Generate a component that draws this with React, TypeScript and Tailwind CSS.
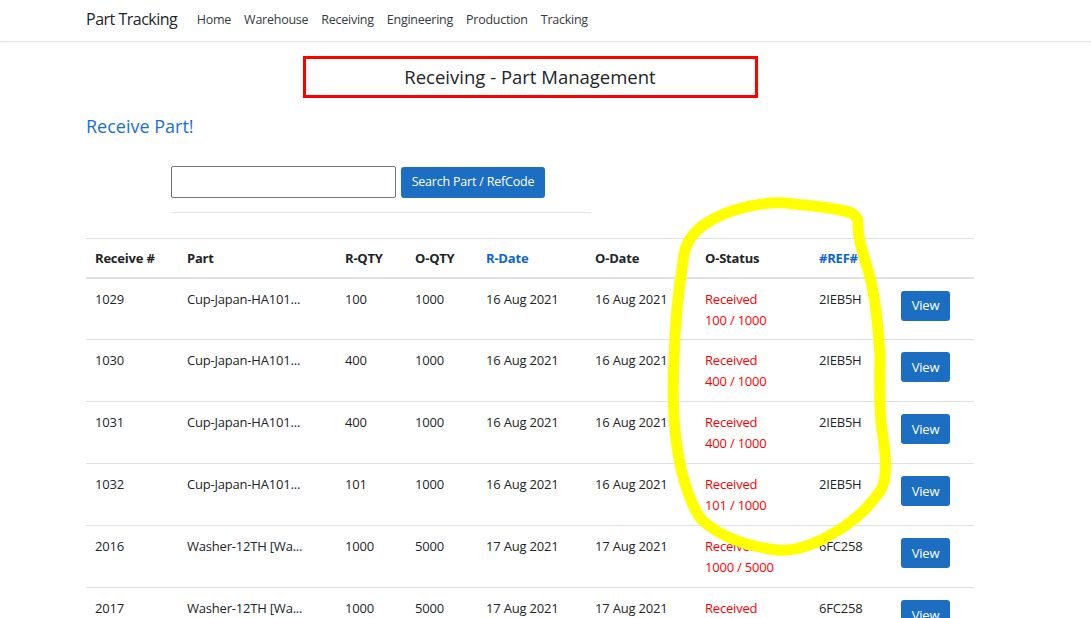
import React from "react";

interface ReceiveRow {
  id: number;
  part: string;
  rQty: number;
  oQty: number;
  rDate: string;
  oDate: string;
  ref: string;
}

const rows: ReceiveRow[] = [
  { id: 1029, part: "Cup-Japan-HA101...", rQty: 100, oQty: 1000, rDate: "16 Aug 2021", oDate: "16 Aug 2021", ref: "2IEB5H" },
  { id: 1030, part: "Cup-Japan-HA101...", rQty: 400, oQty: 1000, rDate: "16 Aug 2021", oDate: "16 Aug 2021", ref: "2IEB5H" },
  { id: 1031, part: "Cup-Japan-HA101...", rQty: 400, oQty: 1000, rDate: "16 Aug 2021", oDate: "16 Aug 2021", ref: "2IEB5H" },
  { id: 1032, part: "Cup-Japan-HA101...", rQty: 101, oQty: 1000, rDate: "16 Aug 2021", oDate: "16 Aug 2021", ref: "2IEB5H" },
  { id: 2016, part: "Washer-12TH [Wa...", rQty: 1000, oQty: 5000, rDate: "17 Aug 2021", oDate: "17 Aug 2021", ref: "6FC258" },
  { id: 2017, part: "Washer-12TH [Wa...", rQty: 1000, oQty: 5000, rDate: "17 Aug 2021", oDate: "17 Aug 2021", ref: "6FC258" },
];

const navLinks = ["Home", "Warehouse", "Receiving", "Engineering", "Production", "Tracking"];

// column widths, left to right
const cols = ["w-[92px]", "w-[158px]", "w-[70px]", "w-[71px]", "w-[109px]", "w-[110px]", "w-[114px]", "w-[82px]", "w-[82px]"];

export default function App() {
  return (
    <div
      className="relative min-h-[618px] bg-white text-[13px] tracking-[-0.2px] text-[#212529]"
      style={{ fontFamily: '"Open Sans", "Noto Sans", Arial, sans-serif' }}
    >
      {/* Navbar */}
      <nav className="h-[42px] border-b border-[#e5e5e5] shadow-[0_1px_3px_rgba(0,0,0,0.05)] flex items-center pl-[86px]">
        <span className="-mt-[3px] text-[16px] tracking-[-0.5px] text-[#212529] mr-[13px]">Part Tracking</span>
        <ul className="flex">
          {navLinks.map((l) => (
            <li key={l} className="px-[6.5px] text-[12.5px] tracking-[-0.25px] text-[#343a40]">
              {l}
            </li>
          ))}
        </ul>
      </nav>

      <div className="ml-[86px] w-[888px]">
        {/* Page title */}
        <div className="flex justify-center mt-[14px]">
          <div className="w-[455px] h-[42px] border-[3px] border-[#ff0000] flex items-center justify-center text-[18.5px] tracking-normal text-[#212529]">
            Receiving - Part Management
          </div>
        </div>

        <h2 className="mt-[15px] text-[18px] tracking-normal text-[#1a6fd6]">Receive Part!</h2>

        {/* Search */}
        <div className="ml-[85px] w-[420px] mt-[26px]">
          <div className="flex items-center gap-[5px]">
            <input
              type="text"
              className="w-[225px] h-[32px] border border-[#767676] rounded-[2px] px-2 outline-none"
            />
            <button className="w-[144px] h-[31px] bg-[#1b6ec2] text-white text-[12.5px] rounded-[3px]">
              Search Part / RefCode
            </button>
          </div>
          <hr className="mt-[14px] border-t border-[#e5e5e5]" />
        </div>

        {/* Table */}
        <table className="mt-[25px] w-[888px] border-collapse table-fixed">
          <thead>
            <tr className="h-[39px] border-t border-[#dee2e6] border-b-2 border-b-[#dee2e6] text-left font-bold">
              <th className={`${cols[0]} px-[9px] pt-[1px]`}>Receive #</th>
              <th className={`${cols[1]} px-[9px] pt-[1px]`}>Part</th>
              <th className={`${cols[2]} px-[9px] pt-[1px]`}>R-QTY</th>
              <th className={`${cols[3]} px-[9px] pt-[1px]`}>O-QTY</th>
              <th className={`${cols[4]} px-[9px] pt-[1px] text-[#0b64d6]`}>R-Date</th>
              <th className={`${cols[5]} px-[9px] pt-[1px]`}>O-Date</th>
              <th className={`${cols[6]} px-[9px] pt-[1px]`}>O-Status</th>
              <th className={`${cols[7]} px-[9px] pt-[1px] text-[#0b64d6]`}>#REF#</th>
              <th className={`${cols[8]} px-[9px]`}></th>
            </tr>
          </thead>
          <tbody>
            {rows.map((r) => (
              <tr key={r.id} className="h-[62px] border-b border-[#dee2e6] align-top leading-[21px]">
                <td className="px-[9px] pt-[10px]">{r.id}</td>
                <td className="px-[9px] pt-[10px] whitespace-nowrap">{r.part}</td>
                <td className="px-[9px] pt-[10px]">{r.rQty}</td>
                <td className="px-[9px] pt-[10px]">{r.oQty}</td>
                <td className="px-[9px] pt-[10px] whitespace-nowrap">{r.rDate}</td>
                <td className="px-[9px] pt-[10px] whitespace-nowrap">{r.oDate}</td>
                <td className="px-[9px] pt-[10px] text-[#ff0000]">
                  <div>Received</div>
                  <div>
                    {r.rQty} / {r.oQty}
                  </div>
                </td>
                <td className="px-[9px] pt-[10px]">{r.ref}</td>
                <td className="px-[9px] pt-[12px]">
                  <button className="w-[49px] h-[30px] bg-[#1b6ec2] text-white text-[13px] rounded-[3px]">
                    View
                  </button>
                </td>
              </tr>
            ))}
          </tbody>
        </table>
      </div>

      {/* hand-drawn yellow highlight */}
      <svg
        className="absolute top-0 left-0 pointer-events-none"
        width="1091"
        height="618"
        viewBox="0 0 1091 618"
      >
        <path
          d="M793 204 C770 200 728 207 702 226 C690 236 684 246 683 262 C678 292 675 323 674 360 C672 400 674 440 682 473 C688 495 694 512 703 521 C720 536 745 546 777 550 C800 552 822 541 842 528 C860 516 870 505 881 490 C889 475 885 450 881 423 C879 395 880 370 880 357 C878 320 874 290 868 270 C862 250 858 238 858 226 C859 218 855 212 840 210 C820 206 805 205 793 204 Z"
          fill="none"
          stroke="#ffff00"
          strokeWidth="11"
          strokeLinecap="round"
          strokeLinejoin="round"
        />
      </svg>
    </div>
  );
}
